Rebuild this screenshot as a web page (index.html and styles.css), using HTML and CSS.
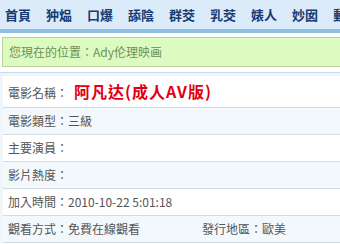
FILE: index.html
```html
<!DOCTYPE html>
<html lang="zh-Hant">
<head>
    <meta charset="UTF-8">
    <title>阿凡达(成人AV版)</title>
    <link rel="stylesheet" href="styles.css">
</head>
<body>
    <div class="nav">
        <a href="#">首頁</a>
        <a href="#">狆煰</a>
        <a href="#">口爆</a>
        <a href="#">舔陰</a>
        <a href="#">群茭</a>
        <a href="#">乳茭</a>
        <a href="#">婊人</a>
        <a href="#">妙囡</a>
        <a href="#">動畫</a>
    </div>
    <div class="nav-line"></div>

    <div class="location">您現在的位置：Ady伦理映画</div>

    <div class="info">
        <div class="row title-row">電影名稱：<span class="title">阿凡达(成人AV版)</span></div>
        <div class="row alt">電影類型：三級</div>
        <div class="row">主要演員：</div>
        <div class="row alt">影片熱度：</div>
        <div class="row">加入時間：2010-10-22 5:01:18</div>
        <div class="row alt split">
            <span class="cell">觀看方式：免費在線觀看</span>
            <span class="cell">發行地區：歐美</span>
        </div>
    </div>
</body>
</html>
```

FILE: styles.css
```css
body {
    margin: 0;
    background-color: #ffffff;
    font-family: "Noto Sans CJK TC", "DejaVu Sans", sans-serif;
    font-size: 12px;
    color: #555555;
}

.nav {
    display: flex;
    align-items: center;
    gap: 15px;
    height: 29px;
    padding-left: 5px;
    background-color: #dcebf9;
    white-space: nowrap;
    overflow: hidden;
}

.nav a {
    flex-shrink: 0;
    font-size: 13px;
    font-weight: bold;
    color: #173b72;
    text-decoration: none;
}

.nav-line {
    height: 4px;
    background-color: #8cbfe1;
    margin-bottom: 4px;
}

.location {
    margin-left: 2px;
    height: 28px;
    line-height: 28px;
    padding-left: 6px;
    border: 1px solid #b9d49c;
    border-right: none;
    background-color: #ddfbc1;
    color: #6f8f55;
}

.info {
    margin-top: 5px;
    padding: 3px 0 0 3px;
    border-top: 1px solid #c8dbee;
    background-color: #eef5fb;
}

.row {
    height: 26px;
    line-height: 26px;
    padding-left: 5px;
    background-color: #ffffff;
    border-bottom: 1px solid #cfdde9;
}

.row.alt {
    background-color: #f3f8fd;
}

.title-row {
    height: 31px;
    line-height: 31px;
}

.title {
    margin-left: 6px;
    font-size: 16px;
    font-weight: bold;
    letter-spacing: 1px;
    color: #e00012;
}

.split {
    display: flex;
}

.split .cell:first-child {
    width: 194px;
}
```
